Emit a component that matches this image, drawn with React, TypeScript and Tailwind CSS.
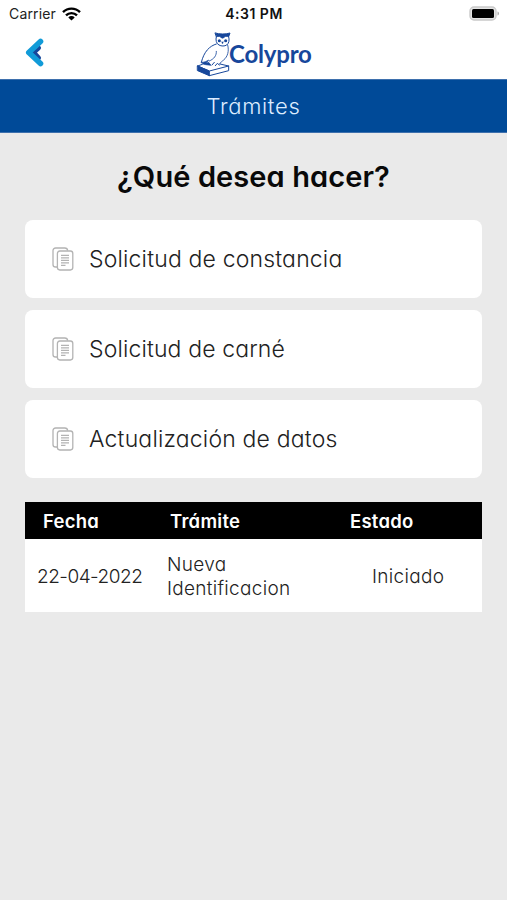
const options = [
  { label: "Solicitud de constancia", tracking: "tracking-[0.17px]" },
  { label: "Solicitud de carné", tracking: "tracking-[0.13px]" },
  { label: "Actualización de datos", tracking: "tracking-[0.18px]" },
];

const rows = [
  { date: "22-04-2022", name: "Nueva Identificacion", status: "Iniciado" },
];

const DocumentIcon = () => (
  <svg width="22" height="24" viewBox="0 0 22 24" fill="none" stroke="#b3b3b3" strokeWidth="1.3">
    <path d="M5 20H3.6A2.6 2.6 0 0 1 1 17.4V3.6A2.6 2.6 0 0 1 3.6 1h9.2a3 3 0 0 1 2.9 2.6" />
    <rect x="5.4" y="4" width="15.4" height="19" rx="2.4" />
    <path d="M9 8.3h8M9 10.8h8M9 13.3h8M9 15.8h8M9 18.3h4.5" />
  </svg>
);

const OwlLogo = () => (
  <svg width="50" height="54" viewBox="0 0 150 162" fill="none" stroke="#17479b" strokeWidth="3" strokeLinecap="round" strokeLinejoin="round">
    <path d="M76 21c10 4 34 4 44 0l-4 11c-6-3-13-1-16 4h-5c-3-5-10-7-15-4z" fill="#17479b" />
    <path d="M79 32c-3 10 0 21 8 25 7 4 17 4 23 0 7-5 9-15 6-25" />
    <circle cx="88" cy="44" r="4.6" fill="#17479b" stroke="none" />
    <circle cx="107" cy="44" r="4.6" fill="#17479b" stroke="none" />
    <path d="M95 48l2.5 6 2.5-6z" fill="#17479b" strokeWidth="1" />
    <path d="M79 54C59 60 42 76 34 109" />
    <path d="M113 57c5 18 0 35-12 45-5 4-9 6-12 12M79 76c1 13-7 23-21 29" strokeWidth="2.5" />
    <path d="M34 109c9 0 16-3 22-7l-8 10 8-3 7 9-16-2-8-2z" fill="#17479b" strokeWidth="2" />
    <path d="M66 117l7-8M76 119l6-7 6 5" />
    <path d="M23 120l14-5M90 114l26 6-58 15-35-15" />
    <path d="M23 120l35 15v14l-35-15z" fill="#17479b" />
    <path d="M58 149l58-15v-14" />
  </svg>
);

const StatusBar = () => (
  <div className="grid h-[27px] grid-cols-[1fr_auto_1fr] items-center pl-[9px] pr-[8px] text-[14px] text-[#222]">
    <div className="flex items-center gap-[6px]">
      <span className="tracking-[0.15px]">Carrier</span>
      <svg width="19" height="14" viewBox="0 0 19 14" fill="none" stroke="#000" strokeWidth="2.4">
        <path d="M1 5.2a12 12 0 0 1 17 0M4 8.4a7.8 7.8 0 0 1 11 0" />
        <path d="M9.5 13.5L6.3 10.4a4.5 4.5 0 0 1 6.4 0z" fill="#000" stroke="none" />
      </svg>
    </div>
    <span className="font-semibold tracking-[0.5px] text-[#111]">4:31 PM</span>
    <svg className="justify-self-end" width="30" height="15" viewBox="0 0 30 15">
      <rect x="1" y="1" width="26" height="13" rx="4" fill="#e4e4e4" stroke="#c9c9c9" strokeWidth="1.4" />
      <rect x="3" y="3" width="22" height="9" rx="1.5" fill="#000" />
      <path d="M28.5 5.5c2 .7 2 3.3 0 4z" fill="#aaa" />
    </svg>
  </div>
);

export default function App() {
  return (
    <div className="flex h-[900px] w-[507px] flex-col bg-[#eaeaea] font-['Inter',sans-serif] text-[#222]">
      <header className="bg-white">
        <StatusBar />
        <div className="grid h-[52px] grid-cols-[190px_1fr] items-center">
          <button type="button" aria-label="Volver" className="ml-[25px] w-5">
            <svg width="20" height="30" viewBox="0 0 20 30" fill="none" strokeLinecap="round" strokeLinejoin="round">
              <path d="M13.5 10l-5 4.500 5 5.500" stroke="#17479b" strokeWidth="5" />
              <path d="M15.5 3.500L3.8 14.500l11.7 11" stroke="#119bd8" strokeWidth="5.6" />
            </svg>
          </button>
          <div className="flex h-[52px] items-center">
            <OwlLogo />
            <span className="-ml-[11px] pt-px font-['Lato',sans-serif] text-[24px] font-bold leading-none tracking-[-0.2px] text-[#17479b]">
              Colypro
            </span>
          </div>
        </div>
      </header>

      <div className="flex h-[54px] items-center justify-center border-y border-[#3e70ad] bg-[#004a98] text-[22px] font-light tracking-[0.7px] text-[#dcecff] [font-feature-settings:'cv11']">
        Trámites
      </div>

      <main className="flex flex-col px-[25px] [font-feature-settings:'cv11']">
        <h1 className="flex h-[87px] items-center justify-center pt-px text-[29px] font-semibold tracking-[0.1px] text-[#090909]">
          ¿Qué desea hacer?
        </h1>

        {/* Request options */}
        <div className="flex flex-col gap-[12px]">
          {options.map((item) => (
            <button
              key={item.label}
              type="button"
              className="flex h-[78px] items-center gap-[15px] rounded-[8px] bg-white pl-[27px] text-left"
            >
              <DocumentIcon />
              <span className={`pt-px text-[23px] font-light ${item.tracking}`}>{item.label}</span>
            </button>
          ))}
        </div>

        {/* Request history */}
        <div className="mt-6 bg-white">
          <div className="grid h-[37px] grid-cols-[145px_180px_1fr] items-center bg-black pt-[3px] text-[18.5px] font-semibold tracking-[0.25px] text-white">
            <span className="pl-[18px]">Fecha</span>
            <span>Trámite</span>
            <span>Estado</span>
          </div>
          {rows.map((row) => (
            <div key={row.date} className="grid h-[73px] grid-cols-[142px_205px_1fr] items-center pt-[2px] text-[19px] font-light leading-6">
              <span className="pl-[12px] tracking-[-0.5px]">{row.date}</span>
              <span className="w-[140px] tracking-[0.3px]">{row.name}</span>
              <span className="tracking-[0.3px]">{row.status}</span>
            </div>
          ))}
        </div>
      </main>
    </div>
  );
}
